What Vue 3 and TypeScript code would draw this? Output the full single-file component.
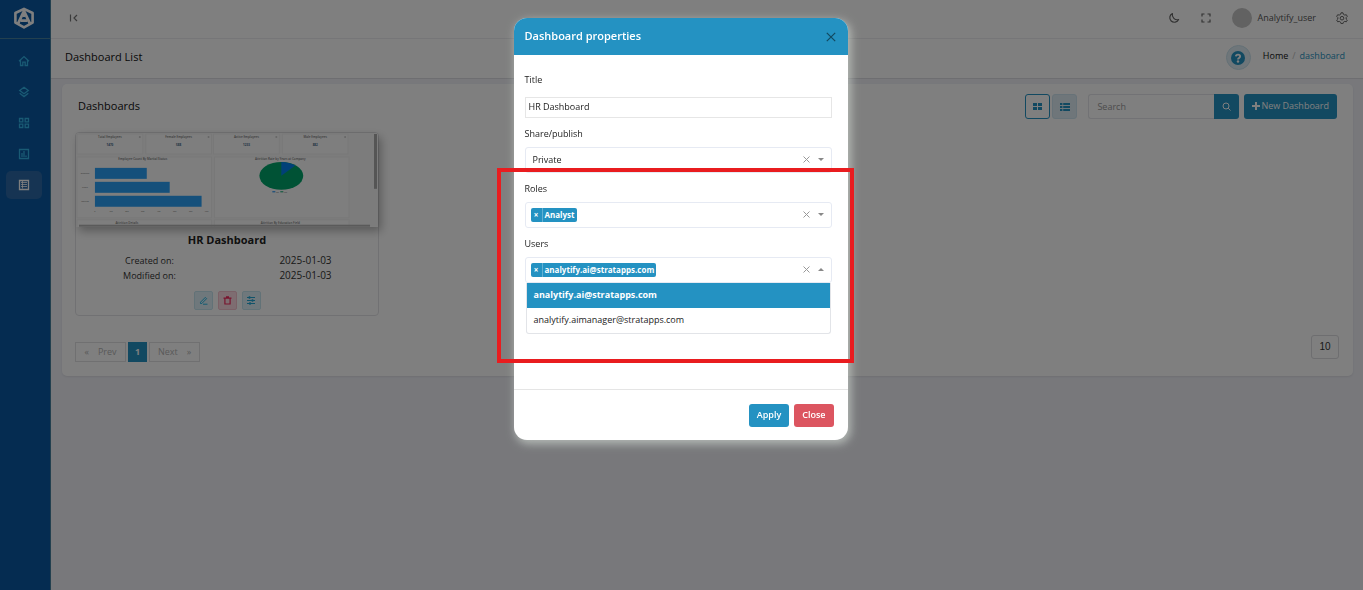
<script setup lang="ts">
import { ref } from 'vue'

const title = ref('HR Dashboard')
const share = ref('Private')
const search = ref('')
const pageSize = ref('10')

const kpis = [
  { label: 'Total Employees', value: '1470', x: 34 },
  { label: 'Female Employees', value: '588', x: 103 },
  { label: 'Active Employees', value: '1233', x: 171 },
  { label: 'Male Employees', value: '882', x: 240 },
]
const bars = [
  { label: 'Divorced', y: 35, width: 52 },
  { label: 'Single', y: 49, width: 75 },
  { label: 'Married', y: 63, width: 107 },
]
const ticks = ['0', '100', '200', '300', '400', '500', '600', '700']
const options = ['analytify.ai@stratapps.com', 'analytify.aimanager@stratapps.com']
</script>

<template>
  <div class="page">
    <aside class="sidebar">
      <a href="#" class="logo" aria-label="Analytify">
        <svg width="22" height="22" viewBox="0 0 22 22" fill="none" stroke="#fff">
          <path d="M11 1.800 19.600 6v9.600L11 20.400 2.400 15.600V6z" stroke-width="2.600" stroke-linejoin="round" />
          <path d="M4.800 17.200 11 4l6.200 13.200M7.800 13.600h6.400" stroke-width="2.800" />
          <path d="M11 5v5" stroke-width="2.400" />
        </svg>
      </a>
      <nav class="menu" aria-label="Main">
        <a href="#" aria-label="Home">
          <svg width="12" height="12" viewBox="0 0 12 12"><path d="M1 6.200 6 1.600l5 4.600M2.500 5.200v5.300h2.300V7.200h2.400v3.300h2.300V5.200" /></svg>
        </a>
        <a href="#" aria-label="Data sources">
          <svg width="12" height="12" viewBox="0 0 12 12"><path d="m6 1.200 4.300 3.300L6 7.800 1.700 4.500zM1.700 7.200 6 10.600l4.300-3.400" /></svg>
        </a>
        <a href="#" aria-label="Sheets">
          <svg width="12" height="12" viewBox="0 0 12 12"><path d="M1.500 1.500h3.300v3.300H1.500zM7.200 1.500h3.300v3.300H7.200zM1.500 7.200h3.300v3.300H1.500zM7.200 7.200h3.300v3.300H7.200z" /></svg>
        </a>
        <a href="#" aria-label="Charts">
          <svg width="12" height="12" viewBox="0 0 12 12"><path d="M1.500 1.500h9v9h-9zM4 9V5M6 9V3M8 9V7.500" /></svg>
        </a>
        <a href="#" class="active" aria-label="Dashboards" aria-current="page">
          <svg width="12" height="12" viewBox="0 0 12 12"><path d="M1.500 1.500h9v9h-9z" /><path d="M3 3.500h6M3 5.500h6M3 7.500h6M4.500 2v7.500" stroke-width=".8" /></svg>
        </a>
      </nav>
    </aside>

    <div class="content">
      <header class="topbar">
        <button class="plain" aria-label="Collapse menu">
          <svg width="10" height="10" viewBox="0 0 10 10" fill="none" stroke="#777" stroke-width="1.200"><path d="M1.500 1.500v7M8 2 5 5l3 3" /></svg>
        </button>
        <div class="tools">
          <button class="plain" aria-label="Dark mode">
            <svg width="12" height="12" viewBox="0 0 12 12" fill="none" stroke="#666" stroke-width="1.200"><path d="M4.400 1.500a4.600 4.600 0 1 0 6.200 6C7 8.600 3.600 5.400 4.400 1.500z" stroke-linejoin="round" /></svg>
          </button>
          <button class="plain" aria-label="Full screen">
            <svg width="12" height="12" viewBox="0 0 12 12" fill="none" stroke="#666" stroke-width="1.200"><path d="M2 4.500V2h2.500M7.500 2H10v2.500M10 7.500V10H7.500M4.500 10H2V7.500" /></svg>
          </button>
          <a href="#" class="user"><span class="avatar"></span>Analytify_user</a>
          <button class="plain" aria-label="Settings">
            <svg width="12" height="12" viewBox="0 0 12 12" fill="none" stroke="#666"><path d="M5 .8h2l.4 1.500 1.400.8 1.500-.4 1 1.700-1.100 1.100v1.500l1.100 1.100-1 1.700-1.500-.4-1.400.8-.4 1.400H5l-.4-1.400-1.400-.8-1.500.4-1-1.700 1.100-1.100V5.500L.7 4.400l1-1.700 1.500.4 1.400-.8z" /><circle cx="6" cy="6.200" r="1.800" /></svg>
          </button>
        </div>
      </header>

      <div class="pagehead">
        <h1>Dashboard List</h1>
        <div class="crumbs">
          <button class="help" aria-label="Help">
            <svg width="14" height="14" viewBox="0 0 14 14"><circle cx="7" cy="7" r="7" fill="#2492c2" /><path d="M4.900 5.400C5 3 9.100 3 9.100 5.400 9.100 6.900 7 6.900 7 8.400" fill="none" stroke="#fff" stroke-width="1.900" /><circle cx="7" cy="10.500" r="1.200" fill="#fff" /></svg>
          </button>
          <nav aria-label="Breadcrumb"><a href="#">Home</a><span>/</span><a href="#" class="here">dashboard</a></nav>
        </div>
      </div>

      <main>
        <section class="panel">
          <div class="panelhead">
            <h2>Dashboards</h2>
            <div class="actions">
              <button class="view on" aria-label="Grid view">
                <svg width="9" height="7" viewBox="0 0 9 7" fill="#2492c2"><path d="M0 0h4v3H0zM5 0h4v3H5zM0 4h4v3H0zM5 4h4v3H5z" /></svg>
              </button>
              <button class="view" aria-label="List view">
                <svg width="10" height="8" viewBox="0 0 10 8" fill="#2492c2"><path d="M0 0h2.400v2H0zM3.200 0H10v2H3.200zM0 3h2.400v2H0zM3.200 3H10v2H3.200zM0 6h2.400v2H0zM3.200 6H10v2H3.200z" /></svg>
              </button>
              <form class="search" @submit.prevent>
                <input v-model="search" type="search" placeholder="Search" aria-label="Search" />
                <button aria-label="Run search">
                  <svg width="9" height="9" viewBox="0 0 9 9" fill="none" stroke="#fff"><circle cx="4" cy="4" r="3" /><path d="m6.200 6.200 2.300 2.300" /></svg>
                </button>
              </form>
              <button class="new">
                <svg width="8" height="8" viewBox="0 0 8 8" fill="#fff"><path d="M3 0h2v3h3v2H5v3H3V5H0V3h3z" /></svg>New Dashboard
              </button>
            </div>
          </div>

          <article class="card">
            <svg class="thumb" viewBox="0 0 303 94" role="img" aria-label="HR Dashboard preview">
              <rect width="303" height="94" fill="#f9f9f9" />
              <g fill="#fcfcfc" stroke="#f1f1f1" stroke-width="1">
                <rect v-for="k in kpis" :key="k.label" :x="k.x - 33" y="1" width="66" height="20" />
                <rect x="1" y="24" width="135" height="61" />
                <rect x="139" y="24" width="135" height="61" />
                <rect x="1" y="87" width="135" height="8" />
                <rect x="139" y="87" width="135" height="8" />
              </g>
              <g class="tiny">
                <template v-for="k in kpis" :key="k.label">
                  <text :x="k.x" y="5">{{ k.label }}</text>
                  <text :x="k.x" y="13" class="num">{{ k.value }}</text>
                  <circle :cx="k.x + 30" cy="4" r="1" fill="#ccc" />
                </template>
                <text x="67" y="27">Employee Count By Marital Status</text>
                <text x="205" y="27">Attrition Rate by Years at Company</text>
                <text x="51" y="91">Attrition Details</text>
                <text x="205" y="91">Attrition By Education Field</text>
              </g>
              <g class="axis">
                <template v-for="b in bars" :key="b.label">
                  <rect x="19" :y="b.y" :width="b.width" height="11" fill="#2aa0f6" />
                  <text x="9" :y="b.y + 6">{{ b.label }}</text>
                </template>
                <text v-for="(t, i) in ticks" :key="t" :x="19 + i * 16" y="79">{{ t }}</text>
              </g>
              <ellipse cx="206" cy="43" rx="22" ry="14" fill="#00a56b" />
              <path d="M206 43V29a22 14 0 0 1 14 3.500z" fill="#0081f0" />
              <path d="M197 59h3" stroke="#0081f0" /><path d="M205 59h3" stroke="#00a56b" />
              <g class="axis"><text x="202" y="60">No</text><text x="210" y="60">Yes</text></g>
              <rect x="299" y="1" width="3" height="55" fill="#aaa" />
              <rect x="3" y="92" width="292" height="2" fill="#b4b4b4" />
            </svg>
            <h3>HR Dashboard</h3>
            <dl>
              <dt>Created on:</dt><dd>2025-01-03</dd>
              <dt>Modified on:</dt><dd>2025-01-03</dd>
            </dl>
            <div class="ops">
              <button aria-label="Edit">
                <svg width="9" height="9" viewBox="0 0 9 9" fill="none" stroke="#23b7e5"><path d="M1.500 6.200 6.300 1.400l1.300 1.300-4.800 4.800H1.500zM4 8.200h4.500" /></svg>
              </button>
              <button class="danger" aria-label="Delete">
                <svg width="9" height="9" viewBox="0 0 9 9" fill="none" stroke="#f1295c" stroke-width="1.200"><path d="M.5 2.200h8M1.900 2.200V8h5.200V2.200M3 .8h3" /></svg>
              </button>
              <button aria-label="Properties">
                <svg width="10" height="9" viewBox="0 0 10 9" fill="none" stroke="#23a7d5"><path d="M1 1.500h8M1 4.500h8M1 7.500h8" /><path d="M3.500.3v2.400M6.500 3.300v2.400M4 6.300v2.400" stroke-width="1.600" /></svg>
              </button>
            </div>
          </article>

          <div class="foot">
            <nav class="pager" aria-label="Pages">
              <button disabled><span>«</span>Prev</button>
              <button class="current" aria-current="page">1</button>
              <button disabled>Next<span>»</span></button>
            </nav>
            <select v-model="pageSize" class="size" aria-label="Rows per page"><option>10</option></select>
          </div>
        </section>
      </main>
    </div>

    <div class="backdrop">
      <div class="modal" role="dialog" aria-modal="true" aria-labelledby="dlg">
        <header class="mhead">
          <h2 id="dlg">Dashboard properties</h2>
          <button class="plain" aria-label="Close dialog">
            <svg width="10" height="10" viewBox="0 0 10 10" stroke="#12485f" stroke-width="1.200"><path d="m.8.8 8.400 8.400M9.200.8.8 9.200" /></svg>
          </button>
        </header>
        <div class="mbody">
          <label for="title">Title</label>
          <input id="title" v-model="title" class="text" type="text" />

          <label for="share">Share/publish</label>
          <div class="box">
            <select id="share" v-model="share"><option>Private</option></select>
            <button class="plain" aria-label="Clear share"><svg class="x" width="7" height="7" viewBox="0 0 7 7"><path d="m.5.5 6 6M6.500.5l-6 6" /></svg></button>
            <span class="arrow"></span>
          </div>

          <label for="roles">Roles</label>
          <div class="box">
            <span class="tag"><button aria-label="Remove Analyst">×</button><span>Analyst</span></span>
            <input id="roles" type="text" role="combobox" aria-expanded="false" />
            <button class="plain" aria-label="Clear roles"><svg class="x" width="7" height="7" viewBox="0 0 7 7"><path d="m.5.5 6 6M6.500.5l-6 6" /></svg></button>
            <span class="arrow"></span>
          </div>

          <label for="users">Users</label>
          <div class="box open">
            <span class="tag"><button aria-label="Remove analytify.ai@stratapps.com">×</button><span>analytify.ai@stratapps.com</span></span>
            <input id="users" type="text" role="combobox" aria-expanded="true" aria-controls="userlist" />
            <button class="plain" aria-label="Clear users"><svg class="x" width="7" height="7" viewBox="0 0 7 7"><path d="m.5.5 6 6M6.500.5l-6 6" /></svg></button>
            <span class="arrow up"></span>
            <ul id="userlist" role="listbox">
              <li v-for="(o, i) in options" :key="o" role="option" :aria-selected="i === 0" :class="{ chosen: i === 0 }">{{ o }}</li>
            </ul>
          </div>
        </div>
        <footer class="mfoot">
          <button class="apply">Apply</button>
          <button class="close">Close</button>
        </footer>
        <div class="callout"></div>
      </div>
    </div>
  </div>
</template>

<style>
body { background: #f0f1f7; }
</style>

<style scoped>
* { box-sizing: border-box; }
.page { display: flex; min-height: 100vh; font: 9px/14px "Open Sans", "Noto Sans", sans-serif; color: #333; background: #f0f1f7; }
h1, h2, h3, dl, dd, ul { margin: 0; padding: 0; font-weight: 400; }
button, input, select { font: inherit; color: inherit; margin: 0; padding: 0; border: 0; background: none; appearance: none; outline: none; border-radius: 0; }
a { color: inherit; text-decoration: none; }
svg { display: block; }
button { display: flex; align-items: center; justify-content: center; }

.sidebar { width: 51px; flex: none; background: #0a58a2; border-right: 1px solid #46809f; }
.logo { display: flex; height: 39px; padding: 0 2px 2px 0; align-items: center; justify-content: center; border-bottom: 1px solid #46809f; }
.menu { display: flex; flex-direction: column; gap: 3px; padding: 8px 8px 0 6px; }
.menu a { height: 28px; display: flex; align-items: center; justify-content: center; border-radius: 5px; }
.menu svg { fill: none; stroke: #33b4e8; stroke-width: 1.3; }
.menu .active { background: #2c69a6; }
.menu .active svg { stroke: #fff; }

.content { flex: 1; min-width: 0; }
.topbar { height: 39px; padding: 0 15px 2px 18px; display: flex; align-items: center; justify-content: space-between; background: #fff; border-bottom: 1px solid #ecedf0; }
.tools { display: flex; align-items: center; gap: 20px; }
.user { display: flex; align-items: center; gap: 6px; color: #555; }
.avatar { width: 20px; height: 20px; border-radius: 50%; background: #c4c4c4; }
.pagehead { height: 40px; padding: 0 18px 2px 14px; display: flex; align-items: center; justify-content: space-between; background: #fff; border-bottom: 1px solid #dcdde2; }
h1, .panelhead h2 { font-size: 11px; color: #111; padding-bottom: 2px; }
.crumbs { display: flex; align-items: center; gap: 12px; }
.crumbs nav { padding-bottom: 4px; color: #111; }
.crumbs nav span { margin: 0 4px; color: #bbb; }
.crumbs .here { color: #2492c2; }
.help { width: 25px; height: 25px; border-radius: 50%; background: #deedf5; border: 1px solid #c9e1ec; }

main { padding: 5px 10px 10px 11px; }
.panel { background: #fff; border-radius: 5px; padding: 10px 14px 14px 13px; box-shadow: 0 1px 2px #dddde4; }
.panelhead { display: flex; justify-content: space-between; align-items: center; padding: 0 2px 0 3px; }
.actions { display: flex; }
.view { width: 25px; height: 25px; border-radius: 3px; background: #deedf5; border: 1px solid #cfe5f0; margin-right: 2px; }
.view.on { background: #fff; border-color: #2492c2; }
.search { display: flex; margin: 0 5px 0 9px; }
.search input { width: 126px; height: 25px; padding: 0 8px; border: 1px solid #e4e5ea; border-right: 0; border-radius: 3px 0 0 3px; }
.search input::placeholder { color: #999; opacity: 1; }
.search button { width: 25px; background: #2492c2; border-radius: 0 3px 3px 0; }
.new { height: 25px; padding: 0 8px 2px; gap: 1px; color: #fff; background: #2492c2; border-radius: 3px; }

.card { width: 304px; max-width: 100%; margin-top: 13px; border: 1px solid #e3e3e6; border-radius: 4px; padding-bottom: 5px; }
.thumb { width: 100%; height: auto; border-radius: 3px 3px 0 0; box-shadow: 3px 4px 10px rgba(0, 0, 0, .3); }
.tiny text, .axis text { font-size: 3px; font-weight: 600; text-anchor: middle; fill: #777; }
.tiny .num { fill: #468; font-weight: 700; }
.axis text { font-size: 2px; fill: #888; }
h3 { font-size: 11px; line-height: 16px; margin-top: 5px; font-weight: 700; text-align: center; color: #222; }
dl { display: grid; grid-template-columns: 147px 1fr; line-height: 15px; margin-top: 5px; text-align: center; }
dd { padding-left: 10px; font-size: 10px; }
.ops { display: flex; justify-content: center; gap: 5px; margin: 8px 0 0; }
.ops button { width: 19px; height: 19px; border-radius: 2px; border: 1px solid #c5e4ef; background: #dff1f8; }
.ops .danger { background: #fcdbe3; border-color: #f5c3cf; }

.foot { display: flex; justify-content: space-between; align-items: flex-start; margin-top: 19px; }
.pager { display: flex; gap: 2px; margin-top: 7px; }
.pager button { height: 20px; width: 51px; gap: 9px; border: 1px solid #e0e0e3; color: #b2b2b2; }
.pager .current { width: 19px; background: #2492c2; border-color: #2492c2; color: #fff; font-weight: 700; }
.size { width: 28px; height: 24px; text-align: center; border: 1px solid #dcdce0; border-radius: 3px; font-family: "Liberation Sans", sans-serif; font-size: 10px; }

.backdrop { position: fixed; inset: 0; padding: 18px 16px 18px 14px; background: rgba(0, 0, 0, .5); }
.modal { position: relative; width: 334px; max-width: 100%; margin: 0 auto; background: #fff; border-radius: 13px; box-shadow: 2px 3px 9px 1px rgba(225, 235, 225, .55); }
.mhead { height: 37px; padding: 0 12px 0 11px; display: flex; align-items: center; justify-content: space-between; color: #fff; background: #2492c2; border-radius: 13px 13px 0 0; }
.mhead h2 { font-size: 11px; font-weight: 600; padding-bottom: 2px; }
.mbody { padding: 18px 16px 106px 11px; color: #222; }
.mbody label { display: block; line-height: 14px; }
.text { display: block; width: 100%; height: 21px; margin: 10px 0 9px; padding: 0 3px 2px; border: 1px solid #e6e6e6; }
.box { position: relative; display: flex; align-items: center; height: 26px; margin: 6px 0 9px; padding: 0 7px 1px 5px; border: 1px solid #e6eaf3; border-radius: 3px; }
.box:last-child { margin-bottom: 0; }
.box select { flex: 1; padding-left: 2px; }
.box input { flex: 1; min-width: 0; }
.x { fill: none; stroke: #999; stroke-width: 1; }
.arrow { width: 0; margin-left: 8px; border: 3px solid transparent; border-top-color: #888; border-bottom: 0; }
.arrow.up { border-top: 0; border-bottom: 3px solid #888; }
.tag { display: flex; height: 14px; line-height: 13px; color: #fff; background: #2492c2; border-radius: 2px; font-weight: 700; font-size: 8px; }
.tag button { width: 12px; border-right: 1px solid #61b1d4; }
.tag > span { padding: 0 2px; }
.box ul { position: absolute; top: 25px; left: 0; right: 0; list-style: none; background: #fff; border: 1px solid #e2e4e8; border-top: 0; border-radius: 0 0 3px 3px; }
.box li { height: 25px; padding: 0 7px; line-height: 24px; }
.box .chosen { color: #fff; background: #2492c2; font-weight: 700; }
.mfoot { display: flex; justify-content: flex-end; gap: 5px; padding: 14px 14px 13px; border-top: 1px solid #e5e5e5; }
.mfoot button { height: 23px; padding: 0 8px 1px; color: #fff; border-radius: 3px; font-weight: 600; }
.apply { background: #2492c2; }
.close { background: #dc5560; }
.callout { position: absolute; top: 150px; left: -17px; right: -6px; height: 195px; border: 4px solid #e91c1f; pointer-events: none; }
</style>
